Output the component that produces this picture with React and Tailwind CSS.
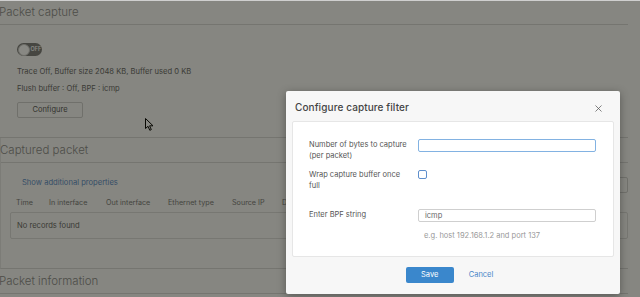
import React from 'react';
import { X } from 'lucide-react';

const columns = [
  { label: 'Time', w: 'w-[33px]' },
  { label: 'In interface', w: 'w-[57px]' },
  { label: 'Out interface', w: 'w-[62px]' },
  { label: 'Ethernet type', w: 'w-[64px]' },
  { label: 'Source IP', w: 'w-[50px]' },
  { label: 'Destination IP', w: 'w-[60px]' },
];

const SectionHeader = ({ title, h = 'h-[25px]' }) => (
  <div className={`${h} flex items-center border-b border-[#d8d8d8]`}>
    <span className="text-[11.5px] font-light text-[#8a8a8a] leading-none -ml-[1px]">{title}</span>
  </div>
);

const Toggle = () => (
  <div className="w-[25px] h-[13px] rounded-full bg-[#7a7a7a] flex items-center">
    <div className="w-[12px] h-[12px] rounded-full bg-white ml-[0.5px] border border-[#c8c8c8]" />
    <span className="ml-[1px] text-[5.5px] font-semibold text-white leading-none">OFF</span>
  </div>
);

const ConfigureModal = () => (
  <div className="absolute left-[286px] top-[90px] w-[334px] h-[203px] bg-[#f7f7f7] rounded-[2px] shadow-[0_2px_8px_rgba(0,0,0,0.35)] flex flex-col px-[6px]">
    <div className="h-[30px] flex items-center justify-between pl-[3px] pr-[10px]">
      <span className="text-[10px] font-medium text-[#444] tracking-[0.1px] mt-[2px]">Configure capture filter</span>
      <X className="w-[11px] h-[11px] text-[#555] mt-[4px]" strokeWidth={1.6} />
    </div>
    <div className="h-[136px] bg-white border border-[#e6e6e6] rounded-[2px] pl-[16px] pt-[17px] text-[7.5px] text-[#555] leading-[11px]">
      <div className="flex">
        <div className="w-[109px]">
          <div>Number of bytes to capture</div>
          <div>(per packet)</div>
        </div>
        <div className="w-[178px] h-[13px] border border-[#82b2e2] rounded-[2px]" />
      </div>
      <div className="flex mt-[8px]">
        <div className="w-[109px]">
          <div>Wrap capture buffer once</div>
          <div>full</div>
        </div>
        <div className="w-[9px] h-[9px] border border-[#5f8fcc] rounded-[2px] mt-[1px]" />
      </div>
      <div className="flex mt-[18px]">
        <div className="w-[109px]">Enter BPF string</div>
        <div className="w-[178px] h-[13px] border border-[#cfcfcf] rounded-[2px] flex items-center pl-[6px] text-[#666]">icmp</div>
      </div>
      <div className="ml-[115px] mt-[8px] text-[#999]">e.g. host 192.168.1.2 and port 137</div>
    </div>
    <div className="flex items-center justify-center gap-[15px] mt-[10px] pr-[7px]">
      <button className="w-[48px] h-[16px] bg-[#3a87cc] rounded-[2px] text-white text-[7.5px] leading-none">Save</button>
      <span className="text-[7.5px] text-[#4a86c8]">Cancel</span>
    </div>
  </div>
);

const Cursor = () => (
  <svg className="absolute left-[145px] top-[117px]" width="9" height="13" viewBox="0 0 9 13">
    <path d="M0.5 0.5 L0.5 10.5 L3 8.3 L4.8 12.3 L6.3 11.6 L4.6 7.8 L8 7.8 Z" fill="#fff" stroke="#000" strokeWidth="1" />
  </svg>
);

export default function App() {
  return (
    <div className="relative w-[640px] h-[297px] overflow-hidden bg-[#fafafa] font-['Inter',sans-serif] border-t border-[#cfcfcf]">
      <div className="pr-[12px]">
        <div className="border-b border-[#d8d8d8]">
          <SectionHeader title="Packet capture" h="h-[24px]" />
          <div className="pl-[17px] pt-[18px] pb-[19px]">
            <Toggle />
            <div className="mt-[11px] text-[7.6px] leading-[10px] text-[#666]">Trace Off, Buffer size 2048 KB, Buffer used 0 KB</div>
            <div className="mt-[7px] text-[7.6px] leading-[10px] text-[#666]">Flush buffer : Off, BPF : icmp</div>
            <button className="mt-[8px] w-[66px] h-[16px] border border-[#cfcfcf] rounded-[2px] bg-[#fafafa] text-[7.5px] text-[#555] leading-none">Configure</button>
          </div>
        </div>

        <div className="border-b border-[#d8d8d8] border-l border-l-[#e6e6e6]">
          <SectionHeader title="Captured packet" />
          <div className="pl-[9px] pt-[11px] pb-[29px]">
            <div className="flex items-center justify-between h-[17px]">
              <span className="ml-[12px] text-[7.6px] text-[#5a8cc8]">Show additional properties</span>
              <div className="w-[70px] h-[16px] mt-[5px] border border-[#d0d0d0] rounded-[2px]" />
            </div>
            <div className="flex h-[18px] mt-[3px] items-center pl-[6px] text-[7.2px] text-[#777]">
              {columns.map((c) => (
                <span key={c.label} className={`${c.w} whitespace-nowrap`}>{c.label}</span>
              ))}
            </div>
            <div className="h-[27px] border border-[#dcdcdc] rounded-[2px] flex items-center pl-[6px] text-[7.6px] text-[#666]">
              No records found
            </div>
          </div>
        </div>

        <SectionHeader title="Packet information" />
      </div>

      <Cursor />
      <div className="absolute inset-0 bg-[rgba(18,18,8,0.5)]" />
      <ConfigureModal />
    </div>
  );
}
